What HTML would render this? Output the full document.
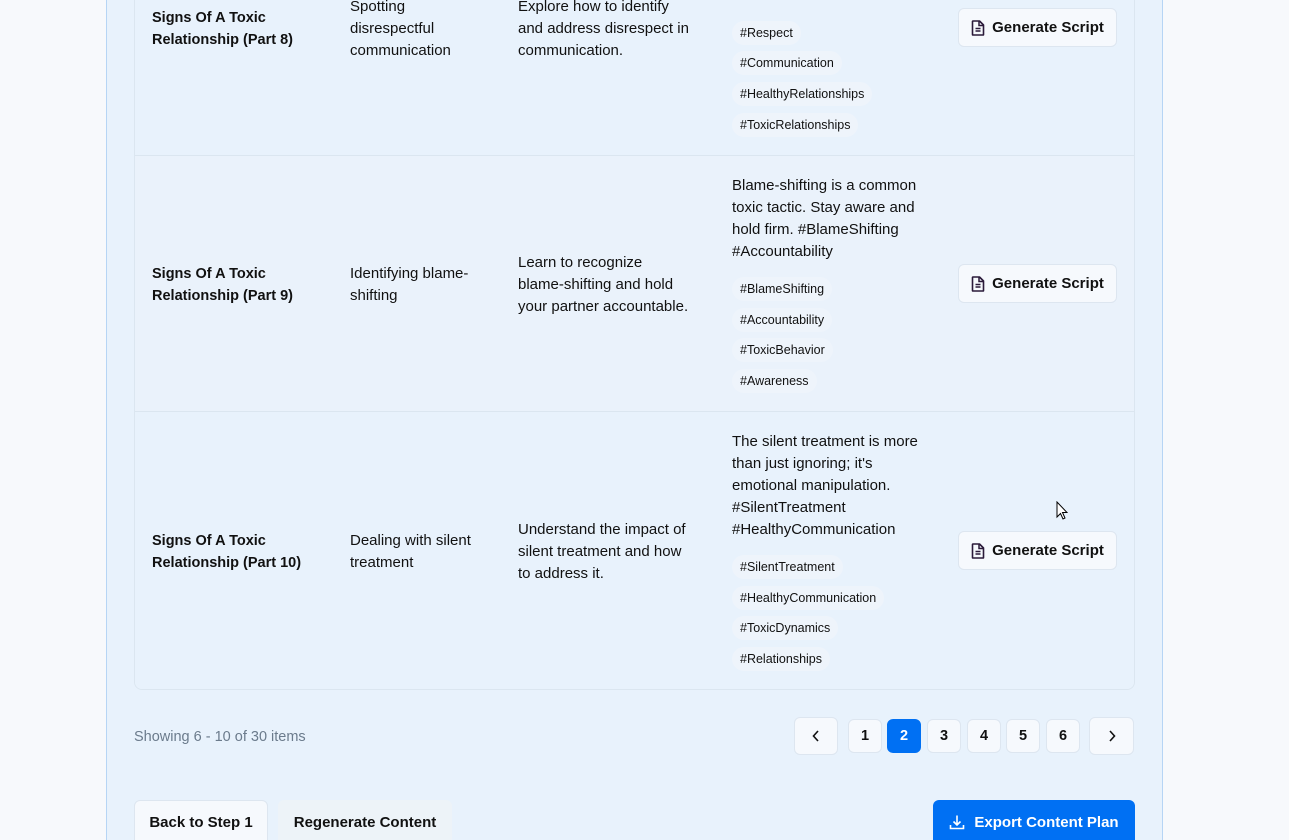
<!DOCTYPE html>
<html style="overflow:hidden;width:1289px;height:840px"><head><style>
*{box-sizing:border-box;margin:0;padding:0}
body{width:1289px;height:840px;overflow:hidden;background:#f7f9fc;font-family:"Liberation Sans",sans-serif;color:#111;position:relative}
.panel{position:absolute;left:106px;top:-20px;width:1057px;height:860px;background:#e8f2fc;border:1px solid #b6d5f5;border-top:none;border-bottom:none}
.table{position:absolute;left:134px;top:-20px;width:1001px;height:710px;border:1px solid #dbe6f0;border-top:none;border-radius:0 0 8px 8px;overflow:hidden}
.row{position:absolute;left:0;width:999px;border-bottom:1px solid #dbe6f0}
.t{position:absolute;font-size:15px;line-height:22px;white-space:nowrap}
.b{font-weight:bold;font-size:14.5px}
.tag{position:absolute;left:732px;height:24px;line-height:24px;padding:0 8px;font-size:12.5px;background:#eef4fb;border-radius:12px;white-space:nowrap}
.btn{position:absolute;left:958px;width:159px;height:39px;background:#f6f9fd;border:1px solid #dde6f0;border-radius:6px;font-weight:bold;font-size:15px;display:flex;align-items:center;justify-content:center;gap:7px}
.pg{position:absolute;top:719px;height:34px;width:34px;background:#f6f9fd;border:1px solid #dde6f0;border-radius:6px;font-size:14.5px;display:flex;align-items:center;justify-content:center;font-weight:bold}
.ar{top:717px;height:38px;width:44px}
.bb{position:absolute;top:800px;height:50px;border-radius:6px;font-weight:bold;font-size:15px;display:flex;align-items:center;justify-content:center;padding-bottom:6px}
</style></head><body>
<div class="panel"></div>
<div class="table">
 <div class="row" style="top:0;height:176px;background:#e8f2fc"></div>
 <div class="row" style="top:176px;height:256px;background:#eaf2fb"></div>
 <div class="row" style="top:432px;height:278px;background:#e8f2fc;border-bottom:none"></div>
</div>
<svg width="0" height="0" style="position:absolute"><defs><symbol id="doc" viewBox="0 0 14 16"><path d="M2 1h6.5L12.5 5v9.5a.5.5 0 0 1-.5.5H2a.5.5 0 0 1-.5-.5V1.5A.5.5 0 0 1 2 1z" fill="none" stroke="#2a1a3a" stroke-width="1.6" stroke-linejoin="round"/><path d="M8 1v4.5h4.5M4.5 8.5h5M4.5 11h5" fill="none" stroke="#2a1a3a" stroke-width="1.5"/></symbol></defs></svg>

<!-- row 1 -->
<div class="t b" style="left:152px;top:7px">Signs Of A Toxic<br>Relationship (Part 8)</div>
<div class="t" style="left:350px;top:-4px">Spotting<br>disrespectful<br>communication</div>
<div class="t" style="left:518px;top:-4px">Explore how to identify<br>and address disrespect in<br>communication.</div>
<div class="tag" style="top:21px">#Respect</div>
<div class="tag" style="top:51px">#Communication</div>
<div class="tag" style="top:82px">#HealthyRelationships</div>
<div class="tag" style="top:113px">#ToxicRelationships</div>
<div class="btn" style="top:8px"><svg width="14" height="16"><use href="#doc"/></svg>Generate Script</div>

<!-- row 2 -->
<div class="t b" style="left:152px;top:263px">Signs Of A Toxic<br>Relationship (Part 9)</div>
<div class="t" style="left:350px;top:263px">Identifying blame-<br>shifting</div>
<div class="t" style="left:518px;top:252px">Learn to recognize<br>blame-shifting and hold<br>your partner accountable.</div>
<div class="t" style="left:732px;top:175px">Blame-shifting is a common<br>toxic tactic. Stay aware and<br>hold firm. #BlameShifting<br>#Accountability</div>
<div class="tag" style="top:277px">#BlameShifting</div>
<div class="tag" style="top:308px">#Accountability</div>
<div class="tag" style="top:338px">#ToxicBehavior</div>
<div class="tag" style="top:369px">#Awareness</div>
<div class="btn" style="top:264px"><svg width="14" height="16"><use href="#doc"/></svg>Generate Script</div>

<!-- row 3 -->
<div class="t b" style="left:152px;top:530px">Signs Of A Toxic<br>Relationship (Part 10)</div>
<div class="t" style="left:350px;top:530px">Dealing with silent<br>treatment</div>
<div class="t" style="left:518px;top:519px">Understand the impact of<br>silent treatment and how<br>to address it.</div>
<div class="t" style="left:732px;top:431px">The silent treatment is more<br>than just ignoring; it's<br>emotional manipulation.<br>#SilentTreatment<br>#HealthyCommunication</div>
<div class="tag" style="top:555px">#SilentTreatment</div>
<div class="tag" style="top:586px">#HealthyCommunication</div>
<div class="tag" style="top:616px">#ToxicDynamics</div>
<div class="tag" style="top:647px">#Relationships</div>
<div class="btn" style="top:531px"><svg width="14" height="16"><use href="#doc"/></svg>Generate Script</div>

<!-- pagination -->
<div class="t" style="left:134px;top:726px;color:#6b7b8c;font-size:14.5px">Showing 6 - 10 of 30 items</div>
<div class="pg ar" style="left:794px"><svg width="10" height="12"><path d="M7 1L2.5 6L7 11" fill="none" stroke="#111" stroke-width="1.6"/></svg></div>
<div class="pg" style="left:848px">1</div>
<div class="pg" style="left:887px;background:#0070f3;border-color:#0070f3;color:#fff">2</div>
<div class="pg" style="left:927px">3</div>
<div class="pg" style="left:967px">4</div>
<div class="pg" style="left:1006px">5</div>
<div class="pg" style="left:1046px">6</div>
<div class="pg ar" style="left:1089px;width:45px"><svg width="10" height="12"><path d="M3 1L7.5 6L3 11" fill="none" stroke="#111" stroke-width="1.6"/></svg></div>

<!-- bottom buttons -->
<div class="bb" style="left:134px;width:134px;background:#f6f9fd;border:1px solid #dde6f0">Back to Step 1</div>
<div class="bb" style="left:278px;width:174px;background:#edf3f8">Regenerate Content</div>
<div class="bb" style="left:933px;width:202px;background:#0070f3;color:#fff;gap:9px"><svg width="16" height="16"><path d="M8 1.5v9M4.5 7.5L8 11l3.5-3.5M1.5 11v3.5h13V11" fill="none" stroke="#fff" stroke-width="1.6"/></svg>Export Content Plan</div>

<svg style="position:absolute;left:1056px;top:501px" width="12" height="19"><path d="M1 1v15l3.5-3.5 2.5 5.5 2-1-2.5-5.5H11z" fill="#fff" stroke="#000" stroke-width="1"/></svg>
</body></html>
